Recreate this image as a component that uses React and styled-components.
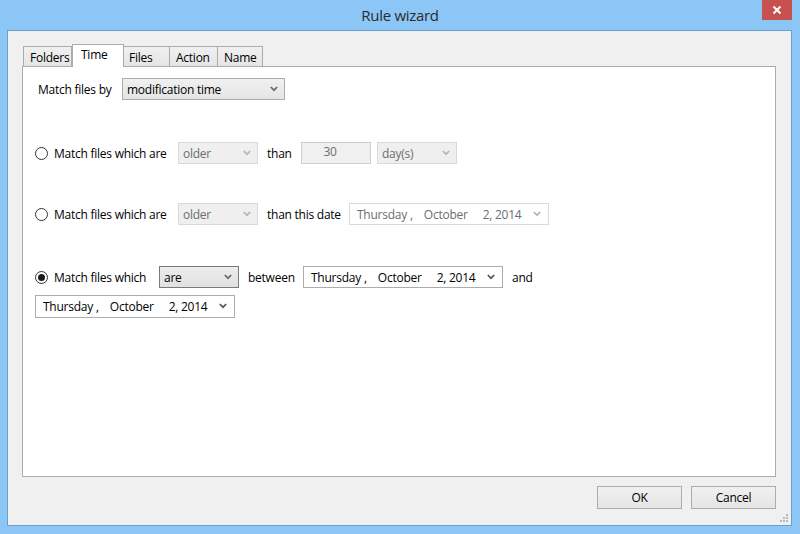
import React from 'react';
import styled, { createGlobalStyle } from 'styled-components';

const Global = createGlobalStyle`
  html, body {
    margin: 0;
    padding: 0;
    background: #8cc6f7;
  }
  body {
    font-family: "Open Sans", "Noto Sans", sans-serif;
    font-size: 12px;
    letter-spacing: -0.25px;
    color: #000;
  }
`;

const Window = styled.div`
  width: 800px;
  height: 534px;
  display: flex;
  flex-direction: column;
  background: #8cc6f7;
  box-sizing: border-box;
`;

const TitleBar = styled.div`
  height: 30px;
  display: flex;
  align-items: flex-start;
  position: relative;
`;

const Title = styled.div`
  flex: 1;
  text-align: center;
  font-size: 15px;
  letter-spacing: -0.3px;
  line-height: 31px;
  color: #2b2b2b;
`;

const CloseButton = styled.div`
  position: absolute;
  top: 0;
  right: 8px;
  width: 30px;
  height: 20px;
  background: #c75050;
  display: flex;
  align-items: center;
  justify-content: center;
`;

const Client = styled.div`
  flex: 1;
  margin: 0 8px 8px 7px;
  background: #f0f0f0;
  border: 1px solid #6c9fd0;
  display: flex;
  flex-direction: column;
  padding: 13px 15px 16px 14px;
  position: relative;
`;

const TabStrip = styled.div`
  display: flex;
  align-items: flex-end;
  height: 23px;
  padding-left: 1px;
`;

const Tab = styled.div`
  box-sizing: border-box;
  width: ${p => p.w}px;
  height: ${p => (p.active ? 23 : 21)}px;
  margin-left: ${p => (p.active ? 0 : -1)}px;
  margin-right: ${p => (p.active ? -1 : 0)}px;
  border: 1px solid #acacac;
  border-bottom: ${p => (p.active ? 'none' : '1px solid #acacac')};
  background: ${p => (p.active ? '#fff' : 'linear-gradient(#f0f0f0, #e5e5e5)')};
  position: relative;
  z-index: ${p => (p.active ? 2 : 1)};
  padding: ${p => (p.active ? '2px 0 0 8px' : '3px 0 0 6px')};
  line-height: 16px;
  &:first-child {
    margin-left: 0;
  }
`;

const Panel = styled.div`
  flex: 1;
  background: #fff;
  border: 1px solid #acacac;
  margin-top: -1px;
  display: flex;
  flex-direction: column;
  padding: 11px 0 0 12px;
`;

const Row = styled.div`
  display: flex;
  align-items: center;
  height: 22px;
  margin-top: ${p => p.top || 0}px;
  margin-left: ${p => p.indent || 0}px;
`;

const Text = styled.span`
  display: inline-block;
  width: ${p => (p.w ? `${p.w}px` : 'auto')};
  margin-left: ${p => p.ml || 0}px;
  white-space: nowrap;
  flex-shrink: 0;
`;

const RadioCircle = styled.span`
  box-sizing: border-box;
  width: 13px;
  height: 13px;
  border-radius: 50%;
  border: 1px solid #333;
  background: #fff;
  margin-right: 6px;
  display: flex;
  align-items: center;
  justify-content: center;
  flex-shrink: 0;
  &::after {
    content: '';
    display: ${p => (p.checked ? 'block' : 'none')};
    width: 7px;
    height: 7px;
    border-radius: 50%;
    background: #1a1a1a;
  }
`;

const Combo = styled.div`
  box-sizing: border-box;
  width: ${p => p.w}px;
  height: 22px;
  margin-left: ${p => p.ml || 0}px;
  flex-shrink: 0;
  display: flex;
  align-items: center;
  justify-content: space-between;
  padding: 0 6px 0 4px;
  border: 1px solid ${p => (p.disabled ? '#d9d9d9' : p.focus ? '#7a7a7a' : '#acacac')};
  background: ${p =>
    p.disabled ? '#efefef' : p.focus ? 'linear-gradient(#ececec, #e1e1e1)' : 'linear-gradient(#f0f0f0, #e5e5e5)'};
  color: ${p => (p.disabled ? '#6d6d6d' : '#000')};
`;

const NumberBox = styled.div`
  box-sizing: border-box;
  width: ${p => p.w}px;
  height: 22px;
  flex-shrink: 0;
  border: 1px solid #cfcfcf;
  background: #f0f0f0;
  color: #6d6d6d;
  text-align: center;
  line-height: 18px;
  padding-right: 12px;
`;

const DateBox = styled.div`
  box-sizing: border-box;
  width: 200px;
  height: ${p => p.h || 22}px;
  flex-shrink: 0;
  margin-left: ${p => p.ml || 0}px;
  display: flex;
  align-items: center;
  padding: 0 7px 0 7px;
  background: #fff;
  border: 1px solid ${p => (p.disabled ? '#d9d9d9' : '#acacac')};
  color: ${p => (p.disabled ? '#6d6d6d' : '#000')};
`;

const DatePart = styled.span`
  margin-left: ${p => p.ml || 0}px;
  white-space: nowrap;
`;

const Spacer = styled.span`
  flex: 1;
`;

const Footer = styled.div`
  display: flex;
  justify-content: flex-end;
  gap: 9px;
  margin-top: 9px;
`;

const Button = styled.div`
  box-sizing: border-box;
  width: 85px;
  height: 23px;
  border: 1px solid #acacac;
  background: linear-gradient(#f0f0f0, #e5e5e5);
  display: flex;
  align-items: center;
  justify-content: center;
`;

const Grip = styled.svg`
  position: absolute;
  right: 2px;
  bottom: 2px;
`;

const Chevron = ({ color }) => (
  <svg width="8" height="6" viewBox="0 0 8 6">
    <path d="M0.8 1 L4 4.2 L7.2 1" fill="none" stroke={color} strokeWidth="1.7" />
  </svg>
);

const Radio = ({ checked }) => <RadioCircle checked={checked} />;

const Select = ({ value, w, ml, disabled, focus }) => (
  <Combo w={w} ml={ml} disabled={disabled} focus={focus}>
    <span>{value}</span>
    <Chevron color={disabled ? '#b5b5b5' : '#6a6a6a'} />
  </Combo>
);

const DatePicker = ({ ml, disabled, h }) => (
  <DateBox ml={ml} disabled={disabled} h={h}>
    <DatePart>Thursday</DatePart>
    <DatePart ml={3}>,</DatePart>
    <DatePart ml={11}>October</DatePart>
    <DatePart ml={15}>2, 2014</DatePart>
    <Spacer />
    <Chevron color={disabled ? '#b5b5b5' : '#555'} />
  </DateBox>
);

export default function App() {
  return (
    <>
      <Global />
      <Window>
        <TitleBar>
          <Title>Rule wizard</Title>
          <CloseButton>
            <svg width="10" height="10" viewBox="0 0 10 10">
              <path d="M1.5 1.5 L8.5 8.5 M8.5 1.5 L1.5 8.5" stroke="#fff" strokeWidth="2" />
            </svg>
          </CloseButton>
        </TitleBar>
        <Client>
          <TabStrip>
            <Tab w={49}>Folders</Tab>
            <Tab w={52} active>Time</Tab>
            <Tab w={48}>Files</Tab>
            <Tab w={49}>Action</Tab>
            <Tab w={46}>Name</Tab>
          </TabStrip>
          <Panel>
            <Row indent={3}>
              <Text w={84}>Match files by</Text>
              <Select value="modification time" w={163} />
            </Row>

            <Row top={42}>
              <Radio />
              <Text w={124}>Match files which are</Text>
              <Select value="older" w={80} disabled />
              <Text w={34} ml={9}>than</Text>
              <NumberBox w={70}>30</NumberBox>
              <Select value="day(s)" w={80} ml={6} disabled />
            </Row>

            <Row top={39}>
              <Radio />
              <Text w={124}>Match files which are</Text>
              <Select value="older" w={80} disabled />
              <Text w={82} ml={9}>than this date</Text>
              <DatePicker disabled />
            </Row>

            <Row top={41}>
              <Radio checked />
              <Text w={105}>Match files which</Text>
              <Select value="are" w={80} focus />
              <Text w={55} ml={9}>between</Text>
              <DatePicker />
              <Text ml={9}>and</Text>
            </Row>

            <Row top={7}>
              <DatePicker h={23} />
            </Row>
          </Panel>
          <Footer>
            <Button>OK</Button>
            <Button>Cancel</Button>
          </Footer>
          <Grip width="10" height="10" viewBox="0 0 10 10">
            <g fill="#b8b8b8">
              <rect x="7" y="1" width="2" height="2" />
              <rect x="4" y="4" width="2" height="2" />
              <rect x="7" y="4" width="2" height="2" />
              <rect x="1" y="7" width="2" height="2" />
              <rect x="4" y="7" width="2" height="2" />
              <rect x="7" y="7" width="2" height="2" />
            </g>
          </Grip>
        </Client>
      </Window>
    </>
  );
}
